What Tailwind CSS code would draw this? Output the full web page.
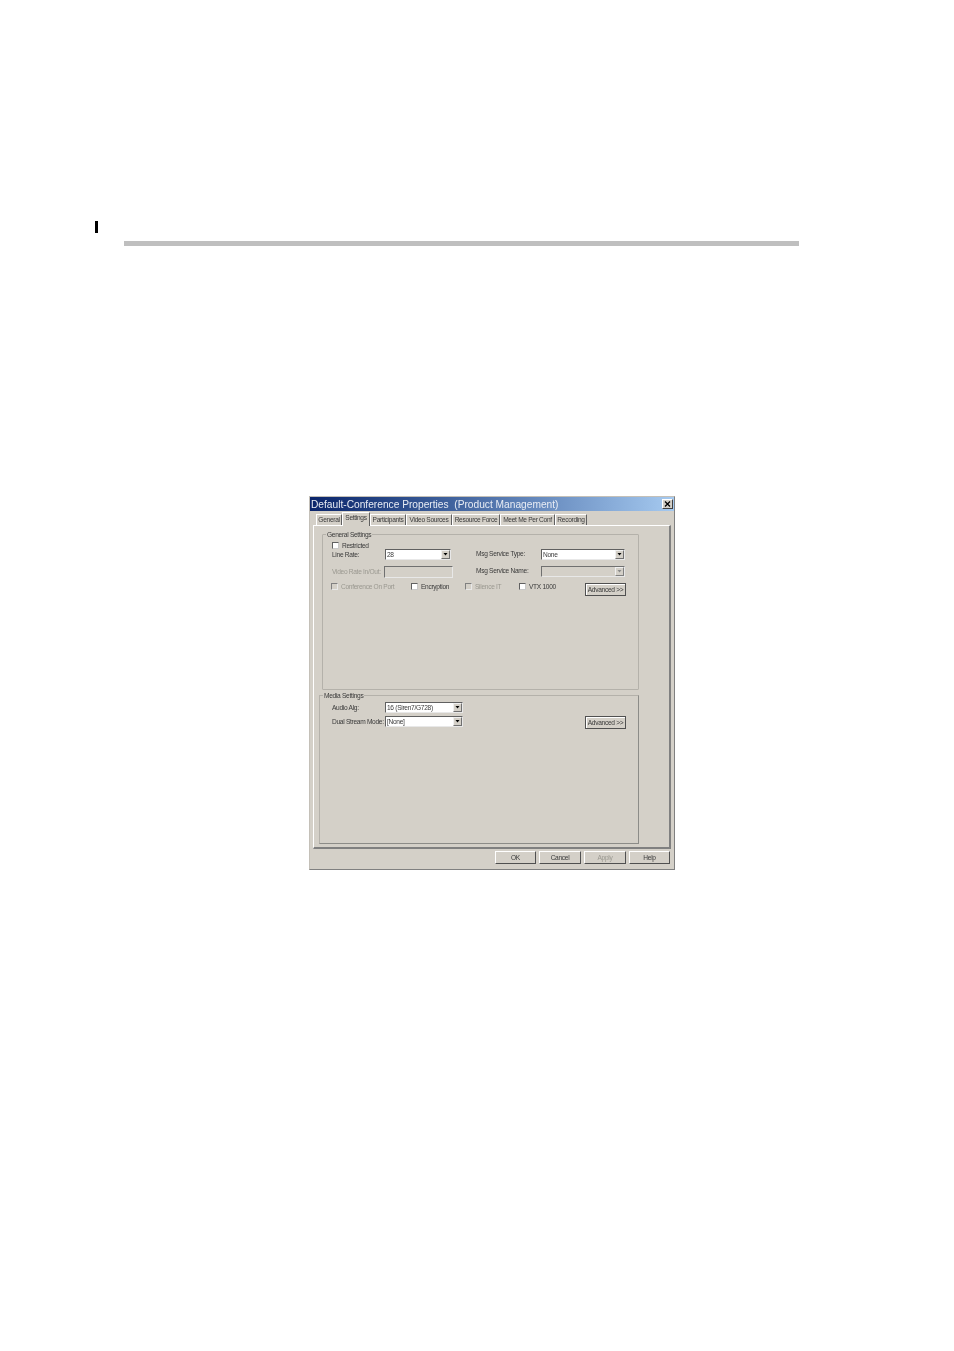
<!DOCTYPE html>
<html lang="en">
<head>
  <meta charset="UTF-8" />
  <title>Default-Conference Properties</title>
  <script src="https://cdn.jsdelivr.net/npm/@tailwindcss/browser@4"></script>
</head>
<body class="bg-white font-['Liberation_Sans',Arial,sans-serif] h-[1351px] overflow-hidden">

  <!-- Page header -->
  <div class="pt-[221px] pl-[95px] h-[241px]">
    <div class="w-[3px] h-[12px] bg-black"></div>
  </div>
  <div class="ml-[124px] w-[675px] h-[5px] bg-[#bfbfbf]"></div>

  <!-- Dialog -->
  <div class="ml-[309px] mt-[250px] w-[366px] h-[374px] bg-[#d4d0c8] border border-[#c4c0b8] border-r-[#808080] border-b-[#808080] text-[6.6px] tracking-[-0.3px] leading-[8px] text-[#3a3a3a] whitespace-nowrap blur-[0.3px]">

    <!-- Title bar -->
    <div class="h-[14px] bg-gradient-to-r from-[#0a246a] to-[#a6caf0] flex items-center justify-between pr-[1px]">
      <span class="pl-[1px] pt-[1px] text-[10.2px] tracking-normal leading-[14px] text-[#e8ecf4] whitespace-pre">Default-Conference Properties  (Product Management)</span>
      <span class="w-[11px] h-[10px] bg-[#d4d0c8] border border-white border-r-[#404040] border-b-[#404040] flex items-center justify-center">
        <svg width="7" height="6" viewBox="0 0 7 6"><path d="M1 0.5 L6 5.5 M6 0.5 L1 5.5" stroke="#000" stroke-width="1.3"/></svg>
      </span>
    </div>

    <!-- Tabs -->
    <div class="h-[14px] pl-[6px] flex items-end relative z-10">
      <div class="w-[26px] h-[11px] pt-[1px] bg-[#d4d0c8] border-t border-l border-white border-r border-r-[#606060] text-center">General</div>
      <div class="w-[28px] h-[14px] bg-[#d4d0c8] border-t border-l border-white border-r border-r-[#606060] text-center -mb-[1px] pt-[1px]">Settings</div>
      <div class="w-[36px] h-[11px] pt-[1px] bg-[#d4d0c8] border-t border-l border-white border-r border-r-[#606060] text-center">Participants</div>
      <div class="w-[46px] h-[11px] pt-[1px] bg-[#d4d0c8] border-t border-l border-white border-r border-r-[#606060] text-center">Video Sources</div>
      <div class="w-[48px] h-[11px] pt-[1px] bg-[#d4d0c8] border-t border-l border-white border-r border-r-[#606060] text-center">Resource Force</div>
      <div class="w-[55px] h-[11px] pt-[1px] bg-[#d4d0c8] border-t border-l border-white border-r border-r-[#606060] text-center">Meet Me Per Conf</div>
      <div class="w-[32px] h-[11px] pt-[1px] bg-[#d4d0c8] border-t border-l border-white border-r border-r-[#606060] text-center">Recording</div>
    </div>

    <!-- Tab panel -->
    <div class="ml-[3px] w-[358px] h-[324px] border border-white border-r-2 border-r-[#808080] border-b-2 border-b-[#808080] pt-[8px]">

      <!-- General Settings -->
      <div class="relative ml-[8px] w-[317px] h-[156px] border border-[#b4b1aa] rounded-[1px] pl-[9px] pt-[7px]">
        <span class="absolute -top-[4px] left-[3px] bg-[#d4d0c8] px-[1px]">General Settings</span>

        <div class="h-[7px] flex items-center">
          <span class="w-[7px] h-[7px] bg-white border border-[#606060] border-r-[#c8c8c8] border-b-[#c8c8c8]"></span>
          <span class="ml-[3px]">Restricted</span>
        </div>

        <div class="h-[11px] flex items-center">
          <span class="w-[53px]">Line Rate:</span>
          <div class="w-[66px] h-[11px] bg-white border border-[#606060] border-r-[#e8e8e8] border-b-[#e8e8e8] flex items-center justify-between pl-[1px]">
            <span>28</span>
            <span class="w-[9px] h-[9px] bg-[#d4d0c8] border border-[#f0f0f0] border-r-[#707070] border-b-[#707070] flex items-center justify-center">
              <svg width="5" height="3" viewBox="0 0 5 3"><path d="M0.5 0 H4.5 L2.5 2.5 Z" fill="#000"/></svg>
            </span>
          </div>
          <span class="ml-[25px] w-[65px] -mt-[2px]">Msg Service Type:</span>
          <div class="w-[84px] h-[11px] bg-white border border-[#606060] border-r-[#e8e8e8] border-b-[#e8e8e8] flex items-center justify-between pl-[1px]">
            <span>None</span>
            <span class="w-[9px] h-[9px] bg-[#d4d0c8] border border-[#f0f0f0] border-r-[#707070] border-b-[#707070] flex items-center justify-center">
              <svg width="5" height="3" viewBox="0 0 5 3"><path d="M0.5 0 H4.5 L2.5 2.5 Z" fill="#000"/></svg>
            </span>
          </div>
        </div>

        <div class="mt-[6px] h-[12px] flex items-center">
          <span class="w-[52px] text-[#9a9890]">Video Rate In/Out:</span>
          <div class="w-[69px] h-[12px] bg-[#d4d0c8] border border-[#707070] border-r-[#e8e8e8] border-b-[#e8e8e8]"></div>
          <span class="ml-[23px] w-[65px] -mt-[3px]">Msg Service Name:</span>
          <div class="w-[84px] h-[11px] -mt-[1px] bg-[#d4d0c8] border border-[#707070] border-r-[#e8e8e8] border-b-[#e8e8e8] flex items-center justify-end">
            <span class="w-[9px] h-[9px] bg-[#d4d0c8] border border-[#f0f0f0] border-r-[#808080] border-b-[#808080] flex items-center justify-center">
              <svg width="5" height="3" viewBox="0 0 5 3"><path d="M0.5 0 H4.5 L2.5 2.5 Z" fill="#8a8a8a"/></svg>
            </span>
          </div>
        </div>

        <div class="mt-[5px] -ml-[1px] h-[13px] flex items-start">
          <div class="w-[80px] flex items-center h-[7px]">
            <span class="w-[7px] h-[7px] bg-[#d4d0c8] border border-[#808080] border-r-[#e8e8e8] border-b-[#e8e8e8]"></span>
            <span class="ml-[3px] text-[#9a9890]">Conference On Port</span>
          </div>
          <div class="w-[54px] flex items-center h-[7px]">
            <span class="w-[7px] h-[7px] bg-white border border-[#606060] border-r-[#c8c8c8] border-b-[#c8c8c8]"></span>
            <span class="ml-[3px]">Encryption</span>
          </div>
          <div class="w-[54px] flex items-center h-[7px]">
            <span class="w-[7px] h-[7px] bg-[#d4d0c8] border border-[#808080] border-r-[#e8e8e8] border-b-[#e8e8e8]"></span>
            <span class="ml-[3px] text-[#9a9890]">Silence IT</span>
          </div>
          <div class="w-[66px] flex items-center h-[7px]">
            <span class="w-[7px] h-[7px] bg-white border border-[#606060] border-r-[#c8c8c8] border-b-[#c8c8c8]"></span>
            <span class="ml-[3px]">VTX 1000</span>
          </div>
          <button class="w-[41px] h-[13px] bg-[#d4d0c8] border border-[#505050] shadow-[inset_1px_1px_0_#fff] text-center">Advanced &gt;&gt;</button>
        </div>
      </div>

      <!-- Media Settings -->
      <div class="relative mt-[5px] ml-[5px] w-[320px] h-[149px] border border-[#b4b1aa] border-r-[#8c8c88] border-b-[#8c8c88] pl-[12px] pt-[6px]">
        <span class="absolute -top-[4px] left-[3px] bg-[#d4d0c8] px-[1px]">Media Settings</span>

        <div class="h-[11px] flex items-center">
          <span class="w-[53px]">Audio Alg:</span>
          <div class="w-[78px] h-[11px] bg-white border border-[#606060] border-r-[#e8e8e8] border-b-[#e8e8e8] flex items-center justify-between pl-[1px]">
            <span>16 (Siren7/G728)</span>
            <span class="w-[9px] h-[9px] bg-[#d4d0c8] border border-[#f0f0f0] border-r-[#707070] border-b-[#707070] flex items-center justify-center">
              <svg width="5" height="3" viewBox="0 0 5 3"><path d="M0.5 0 H4.5 L2.5 2.5 Z" fill="#000"/></svg>
            </span>
          </div>
        </div>

        <div class="mt-[3px] h-[13px] flex items-start">
          <span class="w-[53px] h-[11px] leading-[11px]">Dual Stream Mode:</span>
          <div class="w-[78px] h-[11px] bg-white border border-[#606060] border-r-[#e8e8e8] border-b-[#e8e8e8] flex items-center justify-between pl-[1px]">
            <span>[None]</span>
            <span class="w-[9px] h-[9px] bg-[#d4d0c8] border border-[#f0f0f0] border-r-[#707070] border-b-[#707070] flex items-center justify-center">
              <svg width="5" height="3" viewBox="0 0 5 3"><path d="M0.5 0 H4.5 L2.5 2.5 Z" fill="#000"/></svg>
            </span>
          </div>
          <button class="ml-[122px] w-[41px] h-[13px] bg-[#d4d0c8] border border-[#505050] shadow-[inset_1px_1px_0_#fff] text-center">Advanced &gt;&gt;</button>
        </div>
      </div>
    </div>

    <!-- Footer buttons -->
    <div class="mt-[2px] flex pl-[185px] gap-[3px]">
      <button class="w-[41px] h-[13px] bg-[#d4d0c8] border border-white border-r-[#505050] border-b-[#505050] text-center">OK</button>
      <button class="w-[42px] h-[13px] bg-[#d4d0c8] border border-white border-r-[#505050] border-b-[#505050] text-center">Cancel</button>
      <button class="w-[42px] h-[13px] bg-[#d4d0c8] border border-white border-r-[#505050] border-b-[#505050] text-center text-[#9a9890]">Apply</button>
      <button class="w-[41px] h-[13px] bg-[#d4d0c8] border border-white border-r-[#505050] border-b-[#505050] text-center">Help</button>
    </div>
  </div>

</body>
</html>
